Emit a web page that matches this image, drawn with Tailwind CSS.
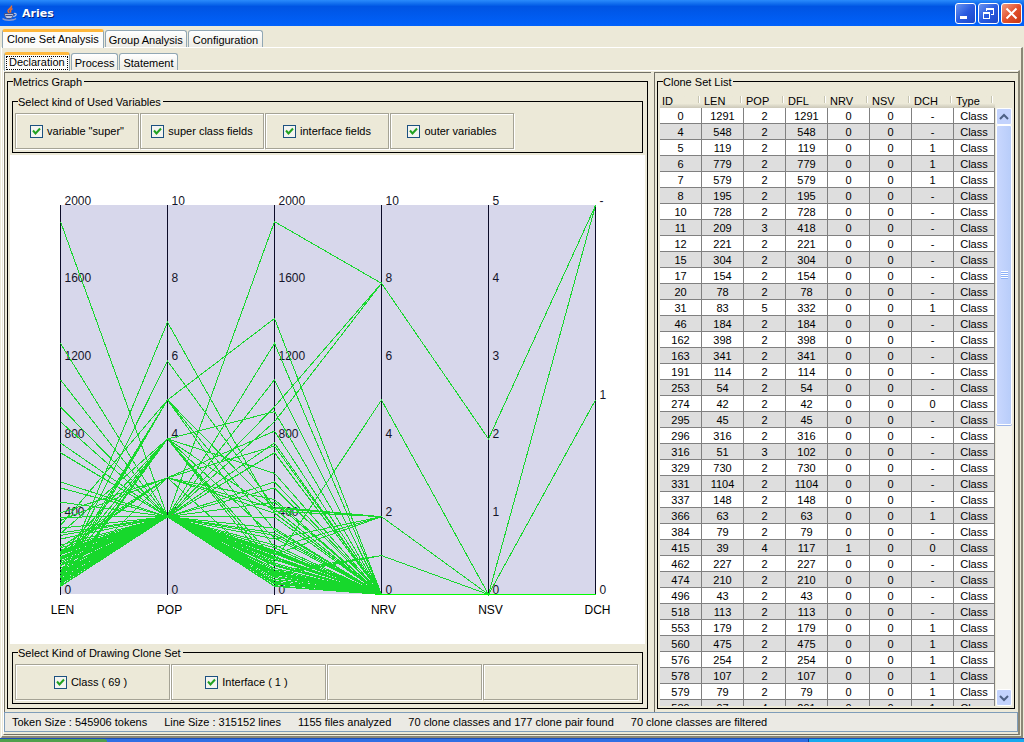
<!DOCTYPE html>
<html lang="en">
<head>
    <meta charset="UTF-8">
    <meta name="viewport" content="width=device-width, initial-scale=1.0">
    <title>Aries</title>
    <script src="https://cdn.jsdelivr.net/npm/@tailwindcss/browser@4"></script>
</head>
<body class="h-screen overflow-hidden flex flex-col bg-[#ece9d8] font-['Liberation_Sans',sans-serif] text-[11px] leading-[13px] text-black">

    <!-- Title bar -->
    <header class="h-[26px] shrink-0 flex items-center justify-between pl-[2px] pr-[2px] bg-linear-to-b from-[#2a8bfb] via-[#0054e3] via-25% to-[#0162fb]">
        <div class="flex items-center gap-1">
            <svg class="w-4 h-4" viewBox="0 0 16 16" fill="none">
                <path d="M9.5 0.5C10.5 3 5.5 4 6 6c0.300 1.200 1.500 1.800 1.500 3M10.500 3.500C8 4.800 8 6 9 7.500" stroke="#f0722c" stroke-width="1.500"/>
                <path d="M2.500 8.500h9c0 3-1.500 4.500-2.500 5H5c-1.500-0.500-2.500-2-2.500-5z" fill="#b9c3e0" stroke="#3c4f8c"/>
                <path d="M3.500 10.500h7" stroke="#3c4f8c"/>
                <path d="M12 8.500c3-0.800 3 2.500-0.800 3" stroke="#b9c3e0" stroke-width="1.200"/>
                <path d="M0.500 13.500c2 2.200 11 2.200 13.500 0" stroke="#8d9acb" stroke-width="1.500"/>
            </svg>
            <h1 class="font-['DejaVu_Sans',sans-serif] font-bold text-white [text-shadow:1px_1px_0_#00207a]">Aries</h1>
        </div>
        <div class="flex gap-[2px]">
            <button aria-label="Minimize" class="w-[21px] h-[21px] rounded-[3px] border border-white bg-linear-to-br from-[#6a93f0] via-[#2a5be0] to-[#1c46c8]">
                <svg class="w-[19px] h-[19px]" viewBox="0 0 19 19"><rect x="4" y="12" width="7" height="3" fill="#fff"/></svg>
            </button>
            <button aria-label="Restore" class="w-[21px] h-[21px] rounded-[3px] border border-white bg-linear-to-br from-[#6a93f0] via-[#2a5be0] to-[#1c46c8]">
                <svg class="w-[19px] h-[19px]" viewBox="0 0 19 19" fill="none" stroke="#fff" shape-rendering="crispEdges">
                    <path d="M7.500 7V4.500h7v6H12M7 5.500h8M4.500 8.500h6v6h-6zM4 9.500h7"/>
                </svg>
            </button>
            <button aria-label="Close" class="w-[21px] h-[21px] rounded-[3px] border border-white bg-linear-to-br from-[#f09a80] via-[#e2502c] to-[#c8370f]">
                <svg class="w-[19px] h-[19px]" viewBox="0 0 19 19" stroke="#fff" stroke-width="2"><path d="M4.500 4.500l10 10M14.500 4.500l-10 10"/></svg>
            </button>
        </div>
    </header>

    <!-- Main tabs -->
    <nav class="h-[21px] shrink-0 flex items-end gap-px pl-[2px]">
        <button class="relative z-10 h-[19px] -mb-px px-1 pb-[2px] rounded-t-[3px] border-x border-t-3 border-x-[#91a7b4] border-t-[#ffb83c] bg-[#fcfcfa]">Clone Set Analysis</button>
        <button class="h-[17px] px-[3px] pt-[2px] rounded-t-[3px] border border-b-0 border-[#91a7b4] bg-linear-to-b from-white to-[#ecebe4]">Group Analysis</button>
        <button class="h-[17px] px-1 pt-[2px] rounded-t-[3px] border border-b-0 border-[#91a7b4] bg-linear-to-b from-white to-[#ecebe4]">Configuration</button>
    </nav>

    <div class="flex-1 min-h-0 flex flex-col mx-px pb-px border-t border-l border-t-white border-l-white border-r-2 border-r-[#8a8776] border-b-2 border-b-[#8a8776]">

        <!-- Sub tabs -->
        <nav class="h-[22px] shrink-0 flex items-end gap-px pl-[2px]">
            <button class="relative z-10 h-[19px] -mb-px px-px rounded-t-[3px] border-x border-t-3 border-x-[#91a7b4] border-t-[#ffb83c] bg-[#fcfcfa]">
                <span class="block h-[14px] px-[2px] border border-dotted border-black leading-[11px]">Declaration</span>
            </button>
            <button class="h-[17px] px-[3px] pt-[2px] rounded-t-[3px] border border-b-0 border-[#91a7b4] bg-linear-to-b from-white to-[#ecebe4]">Process</button>
            <button class="h-[17px] px-[3px] pt-[2px] rounded-t-[3px] border border-b-0 border-[#91a7b4] bg-linear-to-b from-white to-[#ecebe4]">Statement</button>
        </nav>

        <div class="flex-1 min-h-0 flex flex-col mx-px pb-[2px] border-t border-l border-t-white border-l-white border-r-2 border-r-[#8a8776] border-b border-b-[#716f64]">
            <main class="flex-1 min-h-0 flex gap-[3px] pt-px">

                <!-- Metrics graph -->
                <section class="flex-1 min-w-0 flex flex-col border-t border-l border-[#716f64] pt-[2px] pl-[2px] pr-[3px] pb-[3px]">
                    <fieldset class="flex-1 min-h-0 min-w-0 flex flex-col border border-black px-[2px] pt-[7px] pb-1">
                        <legend class="ml-[3px] pt-[2px] pr-[2px] leading-[11px]">Metrics Graph</legend>

                        <fieldset class="shrink-0 mx-[2px] border border-black pt-[5px] pb-[3px] px-[2px]">
                            <legend class="ml-[3px] pt-[2px] pr-[2px] leading-[11px]">Select kind of Used Variables</legend>
                            <div id="variables" class="flex gap-px"></div>
                        </fieldset>

                        <div class="flex-1 min-h-0 my-[2px] bg-white">
                            <svg id="graph" class="block w-full h-full" viewBox="10 155 635 489" font-size="12" role="img" aria-label="Metrics Graph"></svg>
                        </div>

                        <fieldset class="shrink-0 mx-[2px] border border-black pt-[5px] pb-[3px] pl-[2px] pr-1">
                            <legend class="ml-[3px] pt-[2px] pr-[2px] leading-[11px]">Select Kind of Drawing Clone Set</legend>
                            <div id="kinds" class="grid grid-cols-4 gap-px"></div>
                        </fieldset>
                    </fieldset>
                </section>

                <!-- Clone set list -->
                <section class="w-[364px] shrink-0 flex flex-col border-t border-l border-[#716f64] pt-[2px] pl-[2px] pr-[3px] pb-[3px]">
                    <fieldset class="flex-1 min-h-0 min-w-0 flex flex-col border border-black pt-[5px] pl-[2px] pr-[2px] pb-[2px]">
                        <legend class="ml-[3px] pt-[2px] pr-[2px] leading-[11px]">Clone Set List</legend>
                        <div class="flex-1 min-h-0 flex gap-px">
                            <div class="flex-1 min-w-0 overflow-hidden">
                                <table class="w-full table-fixed border-separate border-spacing-0">
                                    <colgroup>
                                        <col class="w-[42px]"><col class="w-[42px]"><col class="w-[42px]"><col class="w-[42px]">
                                        <col class="w-[42px]"><col class="w-[42px]"><col class="w-[42px]"><col>
                                    </colgroup>
                                    <thead><tr id="head"></tr></thead>
                                    <tbody id="rows"></tbody>
                                </table>
                            </div>
                            <div class="w-4 mt-[15px] flex flex-col bg-[#f6f5f0]">
                                <button aria-label="Scroll up" class="h-[17px] shrink-0 rounded-[2px] border border-white bg-[#c3d3fd] flex items-center justify-center">
                                    <svg class="w-[10px] h-[8px]" viewBox="0 0 10 8" fill="none" stroke="#4d6185" stroke-width="2"><path d="M1 6l4-4 4 4"/></svg>
                                </button>
                                <div class="h-[300px] rounded-[2px] border border-white bg-linear-to-r from-[#c9d7fe] to-[#b8cdfa] shadow-[0_1px_0_#9db5e8] flex flex-col items-center justify-center">
                                    <i class="w-[7px] h-px bg-white"></i><i class="w-[7px] h-px bg-[#8cb0f8]"></i>
                                    <i class="w-[7px] h-px bg-white"></i><i class="w-[7px] h-px bg-[#8cb0f8]"></i>
                                    <i class="w-[7px] h-px bg-white"></i><i class="w-[7px] h-px bg-[#8cb0f8]"></i>
                                    <i class="w-[7px] h-px bg-white"></i><i class="w-[7px] h-px bg-[#8cb0f8]"></i>
                                </div>
                                <button aria-label="Scroll down" class="mt-auto h-[17px] shrink-0 rounded-[2px] border border-white bg-[#c3d3fd] flex items-center justify-center">
                                    <svg class="w-[10px] h-[8px]" viewBox="0 0 10 8" fill="none" stroke="#4d6185" stroke-width="2"><path d="M1 2l4 4 4-4"/></svg>
                                </button>
                            </div>
                        </div>
                    </fieldset>
                </section>
            </main>

            <!-- Status bar -->
            <footer class="h-5 shrink-0 flex items-center gap-[17px] pl-[7px] border border-[#7f9db9] bg-[#ebeae4] whitespace-nowrap">
                <span>Token Size : 545906 tokens</span>
                <span>Line Size : 315152 lines</span>
                <span>1155 files analyzed</span>
                <span>70 clone classes and 177 clone pair found</span>
                <span>70 clone classes are filtered</span>
            </footer>
        </div>
    </div>

    <!-- Taskbar edge -->
    <div class="h-1 shrink-0 flex bg-[#2f6fe4] border-t border-[#1d4fb8]">
        <div class="w-[107px] rounded-tr-[3px] bg-[#4fa04c]"></div>
        <div class="ml-auto w-[216px] border-l border-[#0a3f96] bg-[#16a9ee]"></div>
    </div>

    <script>
        // ID, LEN, POP, DFL, NRV, NSV, DCH
        const list = [
            [0, 1291, 2, 1291, 0, 0, "-"], [4, 548, 2, 548, 0, 0, "-"], [5, 119, 2, 119, 0, 0, "1"],
            [6, 779, 2, 779, 0, 0, "1"], [7, 579, 2, 579, 0, 0, "1"], [8, 195, 2, 195, 0, 0, "-"],
            [10, 728, 2, 728, 0, 0, "-"], [11, 209, 3, 418, 0, 0, "-"], [12, 221, 2, 221, 0, 0, "-"],
            [15, 304, 2, 304, 0, 0, "-"], [17, 154, 2, 154, 0, 0, "-"], [20, 78, 2, 78, 0, 0, "-"],
            [31, 83, 5, 332, 0, 0, "1"], [46, 184, 2, 184, 0, 0, "-"], [162, 398, 2, 398, 0, 0, "-"],
            [163, 341, 2, 341, 0, 0, "-"], [191, 114, 2, 114, 0, 0, "-"], [253, 54, 2, 54, 0, 0, "-"],
            [274, 42, 2, 42, 0, 0, "0"], [295, 45, 2, 45, 0, 0, "-"], [296, 316, 2, 316, 0, 0, "-"],
            [316, 51, 3, 102, 0, 0, "-"], [329, 730, 2, 730, 0, 0, "-"], [331, 1104, 2, 1104, 0, 0, "-"],
            [337, 148, 2, 148, 0, 0, "-"], [366, 63, 2, 63, 0, 0, "1"], [384, 79, 2, 79, 0, 0, "-"],
            [415, 39, 4, 117, 1, 0, "0"], [462, 227, 2, 227, 0, 0, "-"], [474, 210, 2, 210, 0, 0, "-"],
            [496, 43, 2, 43, 0, 0, "-"], [518, 113, 2, 113, 0, 0, "-"], [553, 179, 2, 179, 0, 0, "1"],
            [560, 475, 2, 475, 0, 0, "1"], [576, 254, 2, 254, 0, 0, "1"], [578, 107, 2, 107, 0, 0, "1"],
            [579, 79, 2, 79, 0, 0, "1"], [589, 97, 4, 291, 0, 0, "1"]
        ];

        // Clone sets below the visible part of the list: LEN, POP, DFL, NRV, NSV, DCH
        const more = [
            [1917, 2, 1917, 8, 2, "-"], [965, 2, 965, 8, 2, "-"], [888, 2, 888, 8, 2, "-"], [355, 5, 1419, 0, 0, "-"],
            [313, 4, 940, 0, 0, "-"], [420, 3, 840, 0, 0, "-"], [381, 3, 763, 0, 0, "1"], [207, 4, 623, 0, 0, "-"],
            [70, 7, 420, 0, 0, "-"], [90, 6, 450, 2, 0, "-"], [244, 3, 488, 0, 0, "-"], [222, 3, 444, 2, 0, "-"],
            [143, 4, 429, 2, 0, "-"], [60, 5, 240, 0, 0, "-"], [110, 5, 440, 0, 0, "1"], [60, 4, 180, 0, 0, "-"],
            [50, 4, 150, 0, 0, "-"], [170, 2, 170, 5, 0, "-"], [285, 2, 285, 2, 0, "-"], [240, 2, 240, 2, 0, "-"],
            [205, 2, 205, 2, 0, "-"], [105, 2, 105, 1, 0, "-"], [98, 2, 98, 1, 0, "-"], [88, 2, 88, 0, 0, "-"],
            [135, 2, 135, 0, 0, "-"], [127, 2, 127, 0, 0, "-"], [162, 2, 162, 0, 0, "-"], [70, 2, 70, 0, 0, "-"],
            [58, 2, 58, 0, 0, "-"], [94, 2, 94, 0, 0, "-"], [215, 2, 215, 0, 0, "-"], [190, 2, 190, 0, 0, "-"]
        ];

        function renderTable() {
            const names = ["ID", "LEN", "POP", "DFL", "NRV", "NSV", "DCH", "Type"];
            document.querySelector("#head").innerHTML = names.map((n) => `
                <th class="h-[15px] p-0 font-normal text-left bg-linear-to-b from-[#ece9d8] from-70% to-[#cbc7b8]">
                    <div class="flex justify-between px-[2px] pt-[2px]">${n}<i class="w-[2px] h-[7px] mt-px border-l border-[#c7c5b2] bg-white"></i></div>
                </th>`).join("");

            document.querySelector("#rows").innerHTML = list.map((row) => `
                <tr class="odd:bg-white even:bg-[#dedede]">
                    ${[...row, "Class"].map((v) => `<td class="p-0 pt-[2px] text-center border-r border-b border-[#808080]">${v}</td>`).join("")}
                </tr>`).join("");
        }

        function checkbox(label) {
            return `<label class="flex items-center gap-1">
                <span class="relative w-[13px] h-[13px]">
                    <input type="checkbox" checked class="block appearance-none w-[13px] h-[13px] border border-[#1c5180] bg-[#f4f4f0]">
                    <svg class="absolute inset-0 w-[13px] h-[13px] pointer-events-none" viewBox="0 0 13 13" fill="none" stroke="#21a121" stroke-width="2"><path d="M3 5.500l2.500 3L10 3.500"/></svg>
                </span><span class="pt-px">${label}</span></label>`;
        }

        function renderChecks() {
            const cell = "h-9 flex items-center justify-center border border-[#a5a395] shadow-[inset_1px_1px_0_#fff,1px_1px_0_#fff]";
            document.querySelector("#variables").innerHTML =
                ['variable "super"', "super class fields", "interface fields", "outer variables"]
                    .map((t) => `<div class="w-[124px] ${cell}">${checkbox(t)}</div>`).join("");
            document.querySelector("#kinds").innerHTML =
                ["Class ( 69 )", "Interface ( 1 )", "", ""]
                    .map((t) => `<div class="pr-1 ${cell}">${t ? checkbox(t) : ""}</div>`).join("");
        }

        function renderGraph() {
            const left = 60.5, step = 107, top = 205.5, bottom = 594.5;
            const axes = [
                { name: "LEN", max: 2000, ticks: [0, 400, 800, 1200, 1600, 2000] },
                { name: "POP", max: 10, ticks: [0, 2, 4, 6, 8, 10] },
                { name: "DFL", max: 2000, ticks: [0, 400, 800, 1200, 1600, 2000] },
                { name: "NRV", max: 10, ticks: [0, 2, 4, 6, 8, 10] },
                { name: "NSV", max: 5, ticks: [0, 1, 2, 3, 4, 5] },
                { name: "DCH", max: 2, ticks: [0, 1, 2] }
            ];
            const y = (v, max) => bottom - (bottom - top) * v / max;
            let out = `<rect x="60" y="205" width="536" height="389" fill="#d7d7eb"/>`;

            axes.forEach((a, i) => {
                const x = left + step * i;
                out += `<path d="M${x} 205V595" stroke="#0c0c28" shape-rendering="crispEdges"/>`;
                out += `<text x="${x + 2}" y="614" text-anchor="middle">${a.name}</text>`;
                a.ticks.forEach((t) => {
                    const text = a.name === "DCH" && t === 2 ? "-" : t;
                    out += `<text x="${x + 4}" y="${Math.round(y(t, a.max)) - 1}" fill="#14142a">${text}</text>`;
                });
            });

            // One polyline for each clone set
            const sets = list.map((row) => row.slice(1)).concat(more);
            sets.forEach((set) => {
                const points = set.map((v, i) => `${left + step * i},${y(v === "-" ? 2 : Number(v), axes[i].max)}`);
                out += `<polyline points="${points.join(" ")}" fill="none" stroke="#17d82c" shape-rendering="crispEdges"/>`;
            });
            out += `<path d="M375 594.500H596" stroke="#00ff00" shape-rendering="crispEdges"/>`;
            document.querySelector("#graph").innerHTML = out;
        }

        renderTable();
        renderChecks();
        renderGraph();
    </script>
</body>
</html>
